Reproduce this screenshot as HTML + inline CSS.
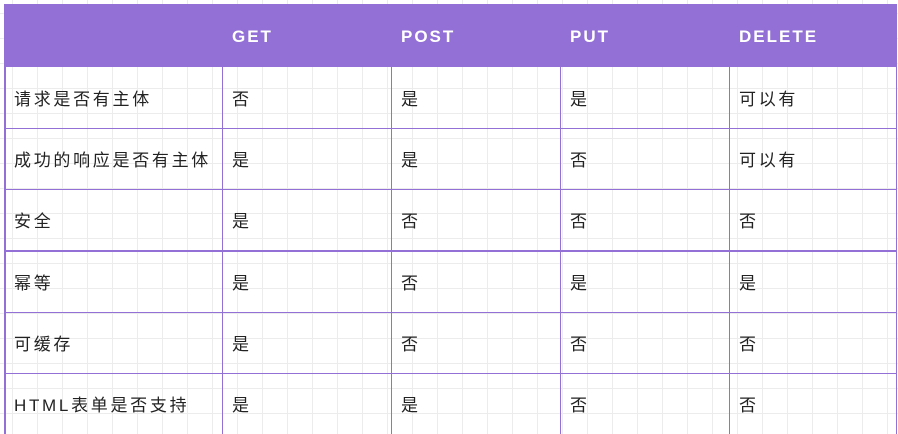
<!DOCTYPE html>
<html><head><meta charset="utf-8"><style>
body{margin:0;width:898px;height:434px;overflow:hidden;background-color:#fff;
background-image:linear-gradient(90deg,#ececec 1px,transparent 1px),linear-gradient(#ececec 1px,transparent 1px);
background-size:25px 25px;background-position:12px 0,0 13px;
font-family:"Liberation Sans","Noto Sans CJK SC",sans-serif;}
.h{position:absolute;left:4px;top:4px;width:893px;height:63px;background:#9370d6;}
.ht{position:absolute;top:27px;color:#fff;font-weight:bold;font-size:17px;letter-spacing:2px}
.v{position:absolute;top:67px;bottom:0;width:1px;background:#9370d6}
.r{position:absolute;left:4px;width:893px;height:1px;background:#9370d6}
.t{position:absolute;font-size:17px;color:#222;letter-spacing:2.7px;line-height:20px;margin-top:2px}
</style></head><body>
<div class="h"></div>
<div class="ht" style="left:232px">GET</div>
<div class="ht" style="left:401px">POST</div>
<div class="ht" style="left:570px">PUT</div>
<div class="ht" style="left:739px">DELETE</div>
<div style="position:absolute;left:4px;top:67px;bottom:0;width:2px;background:#9370d6"></div>
<div class="v" style="left:222px"></div>
<div class="v" style="left:391px"></div>
<div class="v" style="left:560px"></div>
<div class="v" style="left:729px"></div>
<div class="v" style="left:896px"></div>
<div class="r" style="top:128px"></div>
<div class="r" style="top:189px"></div>
<div class="r" style="top:250px;height:2px"></div>
<div class="r" style="top:312px"></div>
<div class="r" style="top:373px"></div>
<div class="t" style="left:14px;top:88px">请求是否有主体</div>
<div class="t" style="left:232px;top:88px">否</div><div class="t" style="left:401px;top:88px">是</div><div class="t" style="left:570px;top:88px">是</div><div class="t" style="left:739px;top:88px">可以有</div>
<div class="t" style="left:14px;top:149px">成功的响应是否有主体</div>
<div class="t" style="left:232px;top:149px">是</div><div class="t" style="left:401px;top:149px">是</div><div class="t" style="left:570px;top:149px">否</div><div class="t" style="left:739px;top:149px">可以有</div>
<div class="t" style="left:14px;top:210px">安全</div>
<div class="t" style="left:232px;top:210px">是</div><div class="t" style="left:401px;top:210px">否</div><div class="t" style="left:570px;top:210px">否</div><div class="t" style="left:739px;top:210px">否</div>
<div class="t" style="left:14px;top:272px">幂等</div>
<div class="t" style="left:232px;top:272px">是</div><div class="t" style="left:401px;top:272px">否</div><div class="t" style="left:570px;top:272px">是</div><div class="t" style="left:739px;top:272px">是</div>
<div class="t" style="left:14px;top:333px">可缓存</div>
<div class="t" style="left:232px;top:333px">是</div><div class="t" style="left:401px;top:333px">否</div><div class="t" style="left:570px;top:333px">否</div><div class="t" style="left:739px;top:333px">否</div>
<div class="t" style="left:14px;top:394px">HTML表单是否支持</div>
<div class="t" style="left:232px;top:394px">是</div><div class="t" style="left:401px;top:394px">是</div><div class="t" style="left:570px;top:394px">否</div><div class="t" style="left:739px;top:394px">否</div>
</body></html>
